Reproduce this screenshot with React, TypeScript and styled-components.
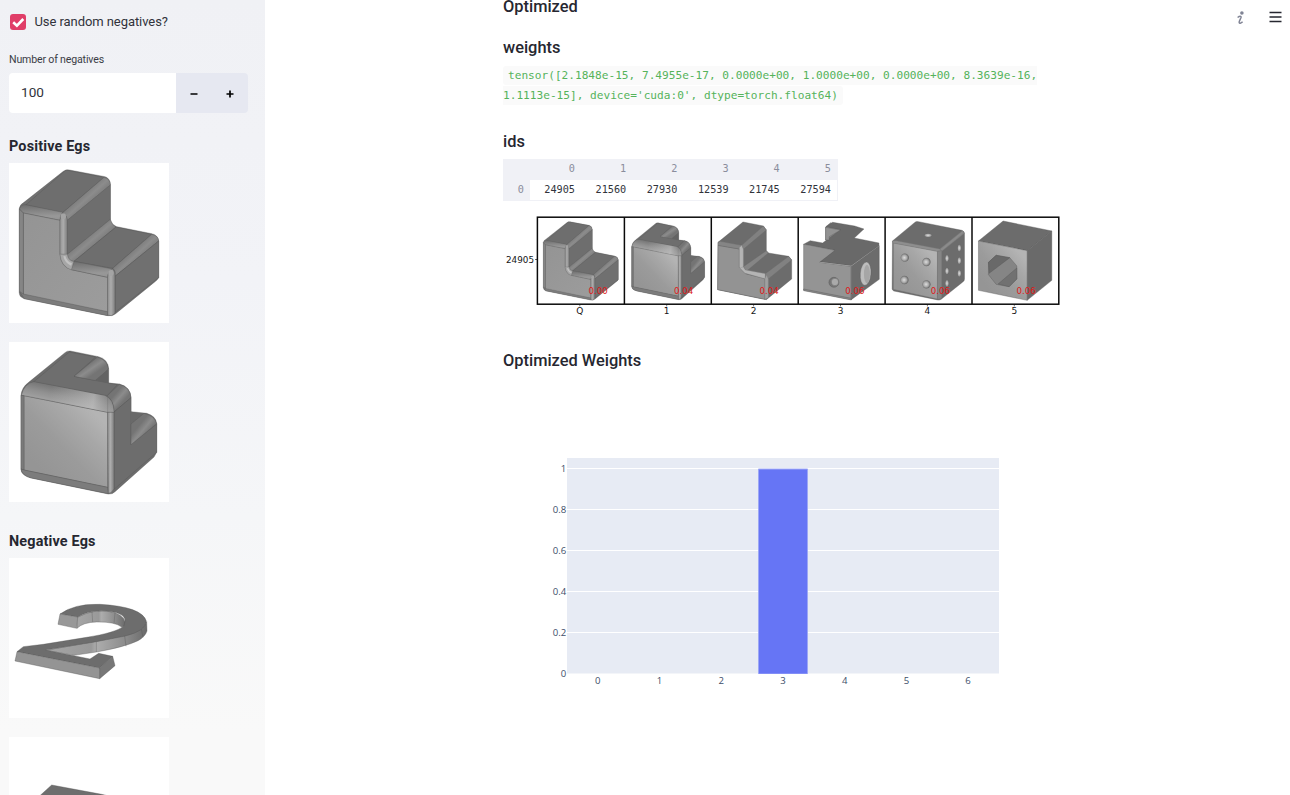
import React from "react";
import styled, { createGlobalStyle } from "styled-components";

const GlobalStyle = createGlobalStyle`
  * { box-sizing: border-box; }
  html, body { margin: 0; padding: 0; }
  body {
    height: 795px;
    overflow: hidden;
    background: #fff;
    color: #262730;
    font-family: Roboto, "Liberation Sans", sans-serif;
    font-size: 14px;
  }
`;

const Page = styled.div`
  display: flex;
  width: 1290px;
  height: 795px;
  overflow: hidden;
`;

const Sidebar = styled.aside`
  width: 265px;
  height: 795px;
  flex: none;
  padding: 11px 17px 0 9px;
  overflow: hidden;
  background: linear-gradient(180deg, #f0f1f5 0%, #f2f3f7 35%, #f5f6f8 65%, #f9f9f9 92%, #f9f9f9 100%);
`;

const CheckRow = styled.label`
  display: flex;
  align-items: center;
  height: 20px;
  gap: 8.5px;
  padding-left: 1px;
  color: #31333b;
  font-size: 13px;
  letter-spacing: -0.07px;
`;

const CheckBox = styled.span`
  display: flex;
  width: 16px;
  height: 16px;
  margin-top: 2px;
  border-radius: 3px;
  background: #e03e68;
`;

const FieldLabel = styled.div`
  margin-top: 21px;
  height: 16px;
  line-height: 16px;
  font-size: 10.6px;
  letter-spacing: -0.17px;
  color: #3a3c45;
`;

const NumberField = styled.div`
  display: flex;
  width: 239px;
  height: 40px;
  margin-top: 5px;
  border-radius: 4px;
  overflow: hidden;
`;

const NumberValue = styled.div`
  width: 167px;
  padding-left: 12px;
  line-height: 39px;
  background: #fff;
  color: #31333b;
  font-size: 13.6px;
`;

const StepButton = styled.button`
  display: flex;
  align-items: center;
  justify-content: center;
  width: 36px;
  padding: 1px 0 0;
  border: 0;
  background: #e6e8f1;
`;

const GroupTitle = styled.h3<{ $top: number }>`
  margin: ${(p) => p.$top}px 0 0;
  height: 20px;
  line-height: 20px;
  font-size: 14.4px;
  letter-spacing: 0.16px;
  font-weight: 700;
`;

const Thumb = styled.svg<{ $top: number }>`
  display: block;
  width: 160px;
  height: 160px;
  margin-top: ${(p) => p.$top}px;
  background: #fff;
`;

const Main = styled.main`
  flex: 1;
  display: flex;
  justify-content: space-between;
  padding-left: 238px;
`;

const Content = styled.div`
  width: 560px;
`;

const Heading = styled.h3<{ $top: number }>`
  margin: ${(p) => p.$top}px 0 0;
  height: 24px;
  line-height: 24px;
  font-size: 16.4px;
  font-weight: 500;
`;

const CodeParagraph = styled.p`
  margin: 6px 0 0;
  height: 40px;
  font-family: "DejaVu Sans Mono", monospace;
  font-size: 11.14px;
  line-height: 20px;
`;

const Code = styled.code`
  padding: 3px 5px;
  border-radius: 3px;
  background: #fafafa;
  color: #55b35a;
  font: inherit;
`;

const Table = styled.div`
  display: grid;
  grid-template-columns: 27px 51px repeat(5, 51.2px);
  width: 335px;
  height: 42px;
  margin-top: 5px;
  border: 1px solid #f0f1f6;
  border-left: 0;
  border-top: 0;
  overflow: hidden;
  font-family: "DejaVu Sans Mono", monospace;
  font-size: 10.2px;
`;

const Cell = styled.div<{ $head?: boolean }>`
  height: ${(p) => (p.$head ? 21 : 20)}px;
  line-height: 20px;
  padding-right: 6px;
  text-align: right;
  color: ${(p) => (p.$head ? "#8a8d9c" : "#31333b")};
  background: ${(p) => (p.$head ? "#f0f1f6" : "#fff")};
`;

const Figure = styled.svg`
  display: block;
  width: 560px;
  height: 115px;
  margin-top: 9px;
`;

const Chart = styled.svg`
  display: block;
  width: 560px;
  height: 315px;
  margin-top: 7px;
`;

const Toolbar = styled.div`
  display: flex;
  gap: 22px;
  padding: 10px 8px 0 0;
  height: 26px;
`;

type FaceProps = { d: string; f?: string; s?: string };

const Face = ({ d, f = "#6c6c6c", s = "#525252" }: FaceProps) => (
  <path d={d} fill={f} stroke={s} strokeWidth={1.1} strokeLinejoin="round" />
);

const Shades = () => (
  <defs>
    <linearGradient id="front" x1="0" y1="0" x2="1" y2="1">
      <stop offset="0" stopColor="#949494" />
      <stop offset="1" stopColor="#9c9c9c" />
    </linearGradient>
    <linearGradient id="sheen" x1="0.25" y1="0.85" x2="0.85" y2="0.2">
      <stop offset="0" stopColor="#959595" />
      <stop offset="0.4" stopColor="#9b9b9b" />
      <stop offset="0.75" stopColor="#a8a8a8" />
      <stop offset="1" stopColor="#b4b4b4" />
    </linearGradient>
    <linearGradient id="edge" x1="0" y1="0" x2="1" y2="0">
      <stop offset="0" stopColor="#939393" />
      <stop offset="0.45" stopColor="#acacac" />
      <stop offset="1" stopColor="#7e7e7e" />
    </linearGradient>
    <linearGradient id="rim" x1="0.42" y1="0" x2="0.5" y2="1">
      <stop offset="0" stopColor="#707070" />
      <stop offset="0.75" stopColor="#989898" />
      <stop offset="1" stopColor="#939393" />
    </linearGradient>
    <linearGradient id="brow" gradientUnits="userSpaceOnUse" x1="205" y1="158" x2="195" y2="208">
      <stop offset="0" stopColor="#737373" />
      <stop offset="0.55" stopColor="#909090" />
      <stop offset="1" stopColor="#a2a2a2" />
    </linearGradient>
    <linearGradient id="glint" gradientUnits="userSpaceOnUse" x1="150" y1="190" x2="335" y2="210">
      <stop offset="0" stopColor="#c8c8c8" stopOpacity="0" />
      <stop offset="0.7" stopColor="#c8c8c8" stopOpacity="0.6" />
      <stop offset="1" stopColor="#999" stopOpacity="0.3" />
    </linearGradient>
    <linearGradient id="slope" x1="0.35" y1="0.35" x2="0.65" y2="0.65">
      <stop offset="0" stopColor="#747474" />
      <stop offset="0.5" stopColor="#8c8c8c" />
      <stop offset="1" stopColor="#747474" />
    </linearGradient>
    <linearGradient id="band" x1="0" y1="0" x2="1" y2="0">
      <stop offset="0" stopColor="#a6a6a6" />
      <stop offset="0.45" stopColor="#999" />
      <stop offset="0.5" stopColor="#adadad" />
      <stop offset="0.8" stopColor="#8a8a8a" />
      <stop offset="1" stopColor="#6a6a6a" />
    </linearGradient>
    <radialGradient id="dot" cx="0.45" cy="0.5" r="0.5">
      <stop offset="0" stopColor="#ddd" />
      <stop offset="0.6" stopColor="#aaa" />
      <stop offset="1" stopColor="#6a6a6a" />
    </radialGradient>
  </defs>
);

const RoundedStep = () => (
  <g>
    <Face f="#717171" d="M58 160Q60 148 72 142L190 49Q198 43 208 45L315 65Q330 70 331 88V195Q335 210 350 215L455 236Q474 240 476 258V368Q472 375 465 380L347 476Q338 484 325 482L70 430Q58 425 58 415Z" />
    <Face f="#6e6e6e" d="M77 150L198 45L312 67L188 173Z" />
    <Face f="url(#slope)" d="M188 173L312 67Q331 72 331 90L202 196Q200 180 188 173Z" />
    <Face f="url(#rim)" d="M58 162Q63 148 77 149L188 172Q179 182 180 196L70 174Z" />
    <Face f="#6e6e6e" s="#646464" d="M202 196L331 90V193L202 298Z" />
    <Face f="url(#slope)" d="M202 298L331 193Q335 210 348 216L222 319Q205 318 202 298Z" />
    <Face f="#6e6e6e" d="M222 319L348 216L455 238L338 340Z" />
    <Face f="url(#slope)" d="M338 340L455 238Q475 242 476 258L345 364Q348 346 338 340Z" />
    <Face f="#707070" d="M345 364L476 258V368L345 472Z" />
    <Face f="url(#front)" d="M70 174L180 196V298Q183 336 214 344L323 367V472L70 421Z" />
    <Face f="#858585" d="M58 162L70 174V421L58 413Z" />
    <Face f="#7c7c7c" d="M60 410L70 417L323 470V482L72 431Z" />
    <Face f="url(#edge)" d="M180 196Q181 180 191 176Q202 182 202 196V298H180Z" />
    <Face f="url(#rim)" d="M214 344L222 319L338 342Q324 350 323 367Z" />
    <path d="M180 298H202Q204 318 221 320L214 344Q184 336 180 298Z" fill="#a6a6a6" stroke="#777" />
    <path d="M196 303Q201 320 216 325L213 332Q194 324 190 304Z" fill="#c2c2c2" />
    <Face f="url(#edge)" d="M323 367Q324 348 337 342Q347 350 345 366V475L334 482L323 480Z" />
    <ellipse cx="190" cy="184" rx="8" ry="9" fill="#a4a4a4" />
    <ellipse cx="333" cy="354" rx="8" ry="9" fill="#a4a4a4" />
  </g>
);

const RoundedNotch = () => (
  <g>
    <Face f="#6d6d6d" d="M63 182Q65 157 86 142L195 53Q201 47 211 48L295 65Q324 72 326 102V144L358 147Q391 155 393 188V230L440 235Q468 243 470 266V352L462 366L345 470Q338 478 325 477L90 428Q63 420 63 403Z" />
    <Face f="#6e6e6e" d="M100 141L208 51L287 66L222 124L352 149L320 184Z" />
    <Face f="url(#slope)" d="M222 124L292 66Q323 75 325 102L288 137Z" />
    <path d="M285 136L325 103V144Z" fill="#636363" />
    <Face f="url(#slope)" d="M320 184L358 148Q391 157 393 188L342 231Q343 198 320 184Z" />
    <Face f="#6d6d6d" d="M342 231L393 188V328L470 267V352L342 463Z" />
    <path d="M393 230L430 236L393 267Z" fill="#696969" />
    <Face f="url(#slope)" d="M393 267L432 235Q464 242 470 266L393 329Z" />
    <Face f="url(#sheen)" d="M72 182L323 232V457L72 405Z" />
    <Face f="url(#brow)" d="M64 181Q73 144 102 140L316 181Q341 190 342 232L323 232L72 182Z" />
    <path d="M66 180Q75 146 104 142L314 182Q339 192 341 231H323L74 181Z" fill="url(#glint)" />
    <Face f="#7a7a7a" d="M63 181L72 182V405L63 402Z" />
    <Face f="#7c7c7c" d="M63 402L72 405L323 457L325 476L94 429Q66 422 63 402Z" />
    <Face f="url(#edge)" d="M323 232H342V461Q335 475 325 475Z" />
    <path d="M323 186V232" stroke="#666" fill="none" />
  </g>
);

const NumeralTwo = () => (
  <g>
    <Face f="url(#band)" d="M233 276Q290 247 345 263Q379 275 376 303L365 306Q345 290 290 291Q248 292 231 310Z" />
    <path d="M276 261L278 291M345 263L342 295" stroke="#555" />
    <Face f="url(#band)" d="M137 376L330 341L425 312L440 290L441 318Q435 336 414 347Q375 366 289 381L222 391Z" />
    <path d="M180 267Q225 235 300 238Q425 245 439 288Q437 318 376 333L289 350L136 375L270 402L296 385L338 394L299 429L51 380L70 365L130 358L260 337Q345 324 371 304Q388 268 336 260Q276 250 233 276Z" fill="#6d6d6d" stroke="#525252" strokeWidth="1.1" />
    <Face f="#989898" d="M180 267L233 276L230 310L174 298Z" />
    <Face f="#949494" d="M51 380L299 429V461L45 408Z" />
    <Face f="#777" d="M299 429L338 394L345 422L299 461Z" />
    <path d="M289 350V381M374 333L378 364M424 312L429 337" stroke="#505050" />
  </g>
);

const ChamferStep = () => (
  <g>
    <Face f="#6c6c6c" d="M39 97L114 36L175 48L184 60V122L190 129L251 139L260 150V207L184 269L38 239Z" />
    <Face f="#939393" d="M39 106L103 117V172L121 191L180 206V268L38 239Z" />
    <Face f="#858585" s="#6a6a6a" d="M39 97L45 94L110 106L103 117L39 106Z" />
    <Face f="#818181" s="#6a6a6a" d="M110 106L175 48L184 60L115 118Z" />
    <Face f="#b4b4b4" s="#8a8a8a" d="M103 113L110 106L115 118V168L121 191L103 172Z" />
    <Face f="#858585" s="#6a6a6a" d="M115 170L184 122L190 129L124 184Z" />
    <Face f="#b4b4b4" s="#8a8a8a" d="M121 180L181 191L180 206L121 190L105 174L115 171Z" />
    <Face f="#818181" s="#6a6a6a" d="M181 191L251 139L260 150L190 207Z" />
    <Face f="#a0a0a0" s="#808080" d="M180 205L185 194L190 207V263L180 268Z" />
  </g>
);

const DrilledBlock = () => (
  <g>
    <Face f="#919191" d="M363 51L378 38L412 58L389 75L384 93L363 90Z" />
    <Face f="#696969" d="M297 103L317 92L354 99L408 59L364 50L384 37L450 48L478 57L449 84L523 99V107L440 167L343 155L390 121L315 107Z" />
    <Face f="#929292" d="M363 52L408 60L374 80V90L363 90Z" />
    <Face f="#949494" d="M297 103L317 106L391 121L345 157L440 169V269L297 240Z" />
    <Face f="#6c6c6c" d="M440 169L524 107V208L440 269Z" />
    <ellipse cx="483" cy="191" rx="16" ry="35" fill="#bdbdbd" stroke="#555" transform="rotate(5 483 191)" />
    <ellipse cx="487" cy="192" rx="9" ry="28" fill="#a6a6a6" />
    <circle cx="388" cy="217" r="15" fill="#777" stroke="#444" />
    <circle cx="391" cy="216" r="11" fill="#aaa" stroke="#555" />
    <Face f="#888" d="M297 237L440 265V270L297 242Z" />
  </g>
);

const frontDots = [[75, 143], [140, 156], [74, 210], [140, 223]];
const sideDots = [[202, 145], [239, 114], [202, 183], [239, 152], [202, 220], [239, 190]];

const Die = () => (
  <g>
    <Face f="#6c6c6c" d="M38 93L104 38Q109 33 116 35L246 61Q254 64 254 70V207Q254 213 249 216L184 268Q178 272 170 269L42 243Q37 240 37 236Z" />
    <Face f="url(#sheen)" s="#777" d="M41 99L173 124V267L41 238Z" />
    <Face f="#8e8e8e" s="#777" d="M38 93L49 92L180 117L186 122L173 124L40 99Z" />
    <Face f="url(#slope)" s="#777" d="M180 117L248 62L254 70L186 124Z" />
    <Face f="#858585" s="#707070" d="M173 124L186 122V265L173 269Z" />
    {frontDots.map(([x, y]) => <circle key={`${x}-${y}`} cx={x} cy={y} r="12.5" fill="url(#dot)" />)}
    {sideDots.map(([x, y]) => <ellipse key={`${x}-${y}`} cx={x} cy={y} rx="6" ry="11" fill="url(#dot)" />)}
    <ellipse cx="146" cy="76" rx="12" ry="6" fill="url(#dot)" />
  </g>
);

const SocketBlock = () => (
  <g>
    <Face f="#6c6c6c" d="M296 93L370 33L516 63L442 122Z" />
    <Face f="#6a6a6a" d="M442 122L516 63V211L442 271Z" />
    <Face f="url(#sheen)" d="M296 93L442 122V271L296 241Z" />
    <Face f="#858585" d="M349 136L390 143L411 168V207L388 230L349 223L326 194V157Z" />
    <Face f="#696969" d="M349 136L390 143L328 190L326 157Z" />
    <Face f="#717171" d="M411 174V207L388 230L355 222Z" />
  </g>
);

const cells = [
  { label: "Q", score: "0.00" },
  { label: "1", score: "0.04" },
  { label: "2", score: "0.04" },
  { label: "3", score: "0.06" },
  { label: "4", score: "0.06" },
  { label: "5", score: "0.06" },
];

const MatchFigure = () => (
  <Figure viewBox="503 210 560 115">
    <svg x="537.8" y="218" width="86" height="86" viewBox="27 24 480 480"><RoundedStep /></svg>
    <svg x="625.2" y="218" width="86" height="86" viewBox="27 21 480 480"><RoundedNotch /></svg>
    <g transform="translate(705 210) scale(0.33333)"><ChamferStep /></g>
    <g transform="translate(704.6 210) scale(0.33333)"><DrilledBlock /></g>
    <g transform="translate(879.8 210) scale(0.33333)"><Die /><SocketBlock /></g>
    <g fill="none" stroke="#0a0a0a" strokeWidth="1.5">
      <rect x="537.4" y="217.2" width="521.4" height="87" />
      {[624.4, 711.3, 798.2, 885.1, 972].map((x) => <path key={x} d={`M${x} 217V304`} />)}
    </g>
    <g fontFamily="DejaVu Sans, sans-serif" fontSize="9" fill="#151515">
      <text x="506" y="263" textLength="28" lengthAdjust="spacingAndGlyphs">24905</text>
      <path d="M535.2 259.5H537" stroke="#222" strokeWidth="0.8" />
      {cells.map((c, i) => (
        <g key={c.label}>
          <path d={`M${579.8 + i * 86.9} 305V306.4`} stroke="#222" strokeWidth="0.6" />
          <text x={579.8 + i * 86.9} y="314.4" textAnchor="middle">{c.label}</text>
          <text x={588.4 + i * 85.6} y="294" fill="#e01818" textLength="19.3" lengthAdjust="spacingAndGlyphs">{c.score}</text>
        </g>
      ))}
    </g>
  </Figure>
);

const WeightChart = () => (
  <Chart viewBox="503 380 560 315">
    <rect x="567" y="458" width="432" height="215.5" fill="#e7ebf4" />
    {[0, 1, 2, 3, 4].map((i) => <path key={i} d={`M567 ${468.5 + i * 41}H999`} stroke="#fff" />)}
    <rect x="758.3" y="468.8" width="49.4" height="205" fill="#6675f5" />
    <path d="M758.5 674V469.2H807.5V674" fill="none" stroke="#a5aef5" strokeWidth="0.7" />
    <g fontFamily="Open Sans, sans-serif" fontSize="9.6" fill="#3d4e69">
      {["1", "0.8", "0.6", "0.4", "0.2", "0"].map((t, i) => (
        <text key={t} x="566.2" y={472 + i * 41} textAnchor="end">{t}</text>
      ))}
      {[0, 1, 2, 3, 4, 5, 6].map((n) => (
        <text key={n} x={597.8 + n * 61.72} y="684.2" textAnchor="middle">{n}</text>
      ))}
    </g>
  </Chart>
);

const ids = ["24905", "21560", "27930", "12539", "21745", "27594"];

export default function App() {
  return (
    <>
      <GlobalStyle />
      <Page>
        <Sidebar>
          <CheckRow>
            <CheckBox>
              <svg width="16" height="16" viewBox="0 0 16 16"><path d="M3.2 8.2L6.9 11.6L13.3 5" fill="none" stroke="#fff" strokeWidth="2.6" /></svg>
            </CheckBox>
            Use random negatives?
          </CheckRow>
          <FieldLabel>Number of negatives</FieldLabel>
          <NumberField>
            <NumberValue>100</NumberValue>
            <StepButton aria-label="Decrease">
              <svg width="8" height="8" viewBox="0 0 8 8"><path d="M0.5 4H7.5" stroke="#000" strokeWidth="1.7" /></svg>
            </StepButton>
            <StepButton aria-label="Increase">
              <svg width="8" height="8" viewBox="0 0 8 8"><path d="M0.5 4H7.5M4 0.5V7.5" stroke="#000" strokeWidth="1.7" /></svg>
            </StepButton>
          </NumberField>
          <GroupTitle $top={24}>Positive Egs</GroupTitle>
          <Thumb $top={6} viewBox="27 24 480 480"><Shades /><RoundedStep /></Thumb>
          <Thumb $top={19} viewBox="27 21 480 480"><RoundedNotch /></Thumb>
          <GroupTitle $top={30}>Negative Egs</GroupTitle>
          <Thumb $top={6} viewBox="27 99 480 480"><NumeralTwo /></Thumb>
          <Thumb $top={19} viewBox="27 636 480 480">
            <Face f="#6e6e6e" d="M155 780L305 808L400 830H100Z" />
          </Thumb>
        </Sidebar>
        <Main>
          <Content>
            <Heading $top={-5}>Optimized</Heading>
            <Heading $top={17}>weights</Heading>
            <CodeParagraph>
              <Code>
                tensor([2.1848e-15, 7.4955e-17, 0.0000e+00, 1.0000e+00, 0.0000e+00, 8.3639e-16,
                <br />
                1.1113e-15], device='cuda:0', dtype=torch.float64)
              </Code>
            </CodeParagraph>
            <Heading $top={24}>ids</Heading>
            <Table>
              <Cell $head />
              {ids.map((id, i) => <Cell $head key={id}>{i}</Cell>)}
              <Cell $head>0</Cell>
              {ids.map((id) => <Cell key={id}>{id}</Cell>)}
            </Table>
            <MatchFigure />
            <Heading $top={24}>Optimized Weights</Heading>
            <WeightChart />
          </Content>
          <Toolbar>
            <svg width="13" height="15" viewBox="0 0 13 15">
              <circle cx="7.9" cy="3" r="1.8" fill="#808495" />
              <path d="M3.6 7.5Q6 5.6 7 6.5Q7.5 7.1 6.3 9.2L5.3 11.4Q4.8 13.6 6.3 13.2Q7.5 13 8.6 11.8" fill="none" stroke="#808495" strokeWidth="1.5" />
            </svg>
            <svg width="13" height="15" viewBox="0 0 13 15"><path d="M0.5 2.5H12.5M0.5 7H12.5M0.5 11.5H12.5" stroke="#262730" strokeWidth="1.4" /></svg>
          </Toolbar>
        </Main>
      </Page>
    </>
  );
}
